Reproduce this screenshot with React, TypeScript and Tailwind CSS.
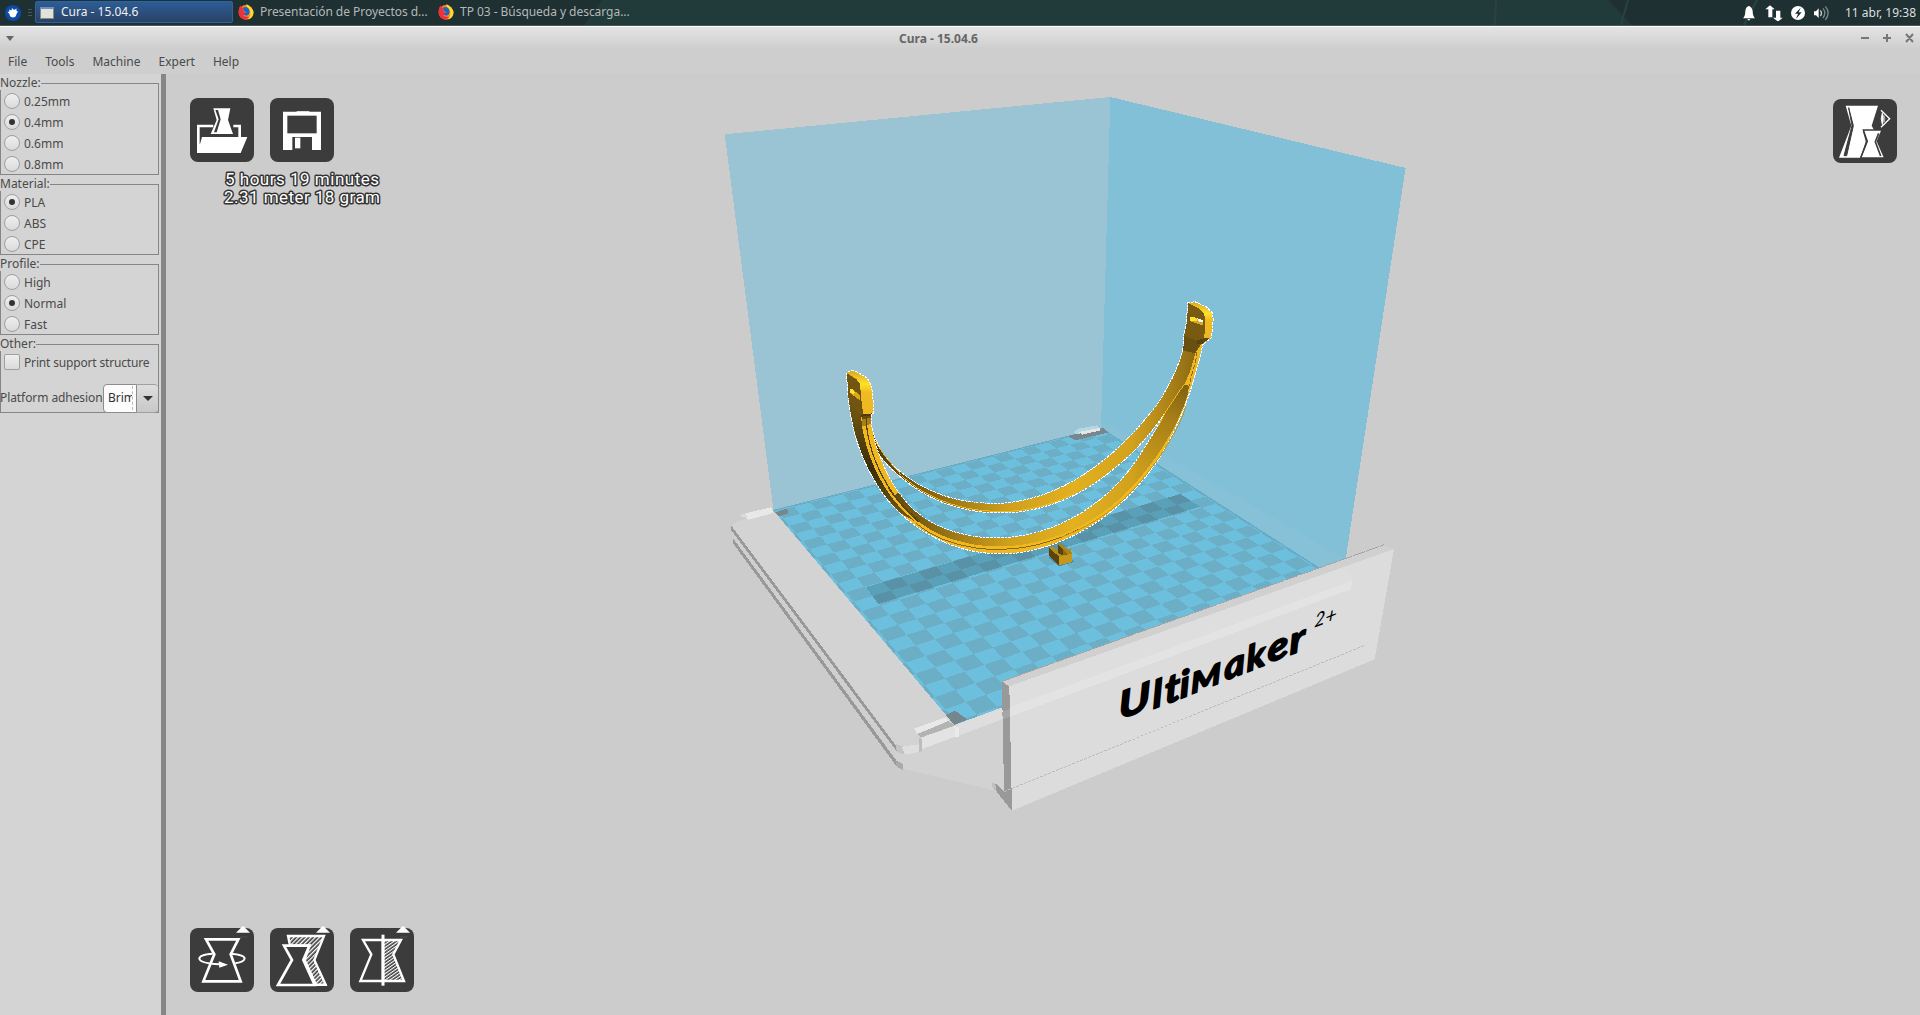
import React from "react";

type Pt = [number, number];

/* Corners of the build plate: back-left, back-right, front-right, front-left */
const P0: Pt = [773.5, 510.5];
const P1: Pt = [1101, 428];
const P2: Pt = [1342, 583];
const P3: Pt = [954.5, 725];

function project(u: number, v: number): Pt {
  const dx1 = P1[0] - P2[0];
  const dx2 = P3[0] - P2[0];
  const dx3 = P0[0] - P1[0] + P2[0] - P3[0];
  const dy1 = P1[1] - P2[1];
  const dy2 = P3[1] - P2[1];
  const dy3 = P0[1] - P1[1] + P2[1] - P3[1];
  const den = dx1 * dy2 - dx2 * dy1;
  const g = (dx3 * dy2 - dx2 * dy3) / den;
  const h = (dx1 * dy3 - dx3 * dy1) / den;
  const w = g * u + h * v + 1;
  return [
    ((P1[0] - P0[0] + g * P1[0]) * u + (P3[0] - P0[0] + h * P3[0]) * v + P0[0]) / w,
    ((P1[1] - P0[1] + g * P1[1]) * u + (P3[1] - P0[1] + h * P3[1]) * v + P0[1]) / w,
  ];
}

const HALF = 111.5;
const clamp = (n: number) => Math.max(-HALF, Math.min(HALF, n));

function darkCells(): string {
  let d = "";
  for (let x = -12; x < 12; x++) {
    for (let y = -12; y < 12; y++) {
      if ((x & 1) === (y & 1)) continue;
      const u1 = (clamp(x * 10) + HALF) / 223;
      const u2 = (clamp(x * 10 + 10) + HALF) / 223;
      const v1 = (HALF - clamp(y * 10)) / 223;
      const v2 = (HALF - clamp(y * 10 + 10)) / 223;
      const q = [project(u1, v1), project(u2, v1), project(u2, v2), project(u1, v2)];
      d += "M" + q.map((p) => p[0].toFixed(1) + " " + p[1].toFixed(1)).join("L") + "Z";
    }
  }
  return d;
}

/* Smooth cubic segments through a list of points (Catmull-Rom) */
function spline(pts: Pt[]): string {
  let d = `L${pts[0][0]} ${pts[0][1]}`;
  for (let i = 0; i < pts.length - 1; i++) {
    const a = pts[Math.max(0, i - 1)];
    const b = pts[i];
    const c = pts[i + 1];
    const e = pts[Math.min(pts.length - 1, i + 2)];
    d += `C${b[0] + (c[0] - a[0]) / 6} ${b[1] + (c[1] - a[1]) / 6} ${c[0] - (e[0] - b[0]) / 6} ${c[1] - (e[1] - b[1]) / 6} ${c[0]} ${c[1]}`;
  }
  return d;
}
const open = (pts: Pt[]) => "M" + spline(pts).slice(1);
const rev = (pts: Pt[]) => pts.slice().reverse();

const OUTER: Pt[] = [
  [84, 300], [88, 342], [96, 388], [106, 432], [122, 482], [145, 535], [172, 583], [205, 630], [245, 672],
  [290, 708], [340, 739], [390, 762], [440, 778], [500, 788], [560, 790], [620, 783], [680, 768], [740, 745],
  [800, 714], [850, 681], [900, 640], [950, 590], [1000, 528], [1040, 463], [1080, 380], [1105, 315],
  [1125, 250], [1137, 207], [1145, 172],
];
const INNER: Pt[] = [
  [1092, 286], [1050, 345], [1015, 408], [985, 457], [950, 512], [915, 558], [870, 605], [820, 646], [760, 684],
  [700, 712], [640, 731], [580, 742], [520, 745], [460, 740], [400, 726], [350, 706], [310, 683], [270, 650],
  [235, 608], [205, 560], [185, 515], [168, 470], [160, 435], [152, 400],
];
const EDGE: Pt[] = [
  [1103, 286], [1104, 310], [1092, 345], [1070, 398], [1040, 452], [1000, 512], [950, 575], [900, 626], [840, 673],
  [780, 708], [720, 735], [650, 756], [580, 767], [500, 768], [440, 759], [380, 742], [330, 718], [290, 690],
  [255, 656], [225, 615],
];
const REAR_TOP: Pt[] = [
  [1090, 182], [1070, 238], [1045, 290], [1010, 347], [960, 408], [910, 461], [850, 513], [790, 556], [730, 590],
  [670, 615], [610, 632], [550, 641], [500, 641], [440, 635], [390, 624], [340, 606], [290, 581], [245, 550],
  [210, 518], [185, 485], [165, 448], [155, 418],
];
const REAR_BOTTOM: Pt[] = [
  [162, 468], [180, 495], [205, 525], [245, 562], [300, 602], [350, 628], [400, 647], [460, 661], [520, 667],
  [580, 666], [640, 657], [700, 640], [760, 615], [820, 581], [870, 544], [920, 502], [960, 462], [1000, 415],
  [1050, 345], [1092, 286],
];
const SIDE: Pt[] = [
  [124, 378], [126, 410], [135, 450], [150, 500], [175, 557], [205, 608], [240, 652], [285, 694],
];

const REAR_BAND = "M1126 190" + spline(REAR_TOP) + spline(REAR_BOTTOM) + "Z";
const BODY =
  "M84 300L81 248L95 243L110 247L140 265L152 285L156 310L160 355L158 370L152 376" +
  spline(rev(INNER)) +
  "L1126 190L1090 182L1092 140L1100 100L1105 39L1125 37L1160 53L1176 70L1178 90L1173 142L1147 163" +
  spline(rev(OUTER)) +
  "Z";
const FRONT_FACE = "M1103 286" + spline(EDGE) + spline(rev(INNER.slice(0, 19))) + "Z";

const LETTERS: { c: string; x: number; y: number; s: number; w: number }[] = [
  { c: "U", x: 418, y: 600, s: 112, w: 1.22 },
  { c: "l", x: 519, y: 567, s: 112, w: 1.1 },
  { c: "t", x: 556, y: 554, s: 116, w: 1.1 },
  { c: "i", x: 601, y: 536, s: 110, w: 1.1 },
  { c: "M", x: 634, y: 523, s: 84, w: 1.22 },
  { c: "a", x: 734, y: 482, s: 110, w: 1.08 },
  { c: "k", x: 801, y: 457, s: 104, w: 1.08 },
  { c: "e", x: 864, y: 430, s: 110, w: 1.16 },
  { c: "r", x: 930, y: 405, s: 112, w: 1.18 },
];

function Scene() {
  return (
    <svg className="block h-full w-full" viewBox="166 74 1754 941" shapeRendering="crispEdges">
      <defs>
        <linearGradient id="inner" gradientUnits="userSpaceOnUse" x1="160" y1="0" x2="1130" y2="0">
          <stop offset="0" stopColor="#4d390b" />
          <stop offset="0.15" stopColor="#7d5f12" />
          <stop offset="0.28" stopColor="#a98017" />
          <stop offset="0.42" stopColor="#d0a01d" />
          <stop offset="0.62" stopColor="#e2b020" />
          <stop offset="0.8" stopColor="#d2a21d" />
          <stop offset="0.91" stopColor="#ad8418" />
          <stop offset="1" stopColor="#8b6914" />
        </linearGradient>
        <linearGradient id="slot" gradientUnits="userSpaceOnUse" x1="1100" y1="286" x2="960" y2="540">
          <stop offset="0" stopColor="#806112" />
          <stop offset="0.4" stopColor="#a98017" />
          <stop offset="1" stopColor="#cb9c1c" />
        </linearGradient>
        <linearGradient id="outer" gradientUnits="userSpaceOnUse" x1="0" y1="250" x2="0" y2="690">
          <stop offset="0" stopColor="#7b5d12" />
          <stop offset="0.3" stopColor="#68500f" />
          <stop offset="0.65" stopColor="#3c2d08" />
          <stop offset="1" stopColor="#76590f" />
        </linearGradient>
        <linearGradient id="tip" x1="0" y1="0" x2="0" y2="1">
          <stop offset="0" stopColor="#dba91f" />
          <stop offset="0.3" stopColor="#ffe12a" />
          <stop offset="0.5" stopColor="#efba22" />
          <stop offset="1" stopColor="#efb820" />
        </linearGradient>
      </defs>

      {/* chamber walls */}
      <path d="M724.7 134.3L1110.4 97L1101 428L773.5 510.5Z" fill="#9ac4d3" />
      <path d="M1110.4 97L1405.6 168L1342 583L1101 428Z" fill="#81c0d7" />

      {/* plate */}
      <path d="M773.5 510.5L1101 428L1342 583L954.5 725Z" fill="#6cbfdd" />
      <path d={darkCells()} fill="#6baec6" />
      <path d="M1101 424L1112 425L1352 563L1342 583L1108 433Z" fill="#86c1d8" />
      <path d="M773.5 510.5L1101 428L1108 432" fill="none" stroke="#69aac2" strokeWidth="1" />
      <path d="M1108 433L1342 583" fill="none" stroke="#67abc6" strokeWidth="1.5" />
      <path d="M865.7 587.3L1180 494L1200 506.7L878.3 604Z" fill="#000" fillOpacity="0.16" />

      {/* back clip */}
      <g transform="translate(820 290) scale(0.33333)">
        <path d="M744 438L852 414L864 428L765 451Z" fill="#7a868c" />
        <path d="M760 426L775 416L830 406L840 414L832 424L770 432Z" fill="#b0d8e7" />
        <path d="M776 426L838 414L842 421L786 434Z" fill="#e6e6e6" />
      </g>

      {/* left carriage and lower body */}
      <g transform="translate(710 480) scale(0.33333)">
        <path d="M63 138L69 190L560 850L578 866L855 932L882 935L882 680L733 735L190 92Z" fill="#d2d2d2" />
        <path d="M63 138L80 125L102 117L190 92L733 735L625 800L585 800L558 793Z" fill="#d3d3d3" />
        <path d="M63 136L63 150L556 808L566 820L556 794Z" fill="#999" />
        <path d="M63 151L69 178L556 842L556 808Z" fill="#cfcfcf" />
        <path d="M69 175L69 190L556 854L572 866L578 852L560 843Z" fill="#999" />
        <path d="M558 793L585 801L627 793L627 816L585 824L560 816Z" fill="#c4c4c4" />
        <path d="M575 800L627 793L627 816L585 824Z" fill="#dedede" />
        <path d="M556 844L580 852L580 871L560 860Z" fill="#aaa" />
        <path d="M94 103L182 82L190 92L190 99L116 119L108 112L94 110Z" fill="#e8e8e8" />
        <path d="M94 103L108 100L112 112L94 112Z" fill="#dadada" />
        <path d="M195 97L232 86L234 101L206 109Z" fill="#7a868c" />
        <path d="M707 705L735 692L772 718L733 735Z" fill="#75868e" />
        <path d="M612 746L708 711L716 722L622 762Z" fill="#e8e8e8" />
        <path d="M622 762L716 723L733 737L634 772Z" fill="#b3b3b3" />
        <path d="M634 773L733 738L736 770L634 808Z" fill="#e3e3e3" />
        <path d="M627 773L635 776L635 814L627 816Z" fill="#bdbdbd" />
        <path d="M733 738L748 742L748 770L736 770Z" fill="#eaeaea" />
        <path d="M733 736L882 681L882 716L748 766L748 742Z" fill="#dedede" />
        <path d="M848 910L860 912L880 934L905 992L856 930Z" fill="#999" />
        <path d="M846 909L856 911L858 932L848 926Z" fill="#c0c0c0" />
      </g>

      {/* small part with its shadow */}
      <g transform="translate(820 290) scale(0.33333)">
        <path d="M684 800L716 829L762 816L752 804Z" fill="#4c8aa3" />
        <path d="M688 773L700 770L718 786L752 775L756 793L718 802Z" fill="#b48c19" />
        <path d="M714 766L722 762L742 778L742 794L728 796L714 788Z" fill="#5b440c" />
        <path d="M728 770L742 780L740 793L728 796Z" fill="#8a6914" />
        <path d="M688 774L718 801L718 826L688 799Z" fill="#5b440c" />
        <path d="M718 801L756 791L756 816L718 826Z" fill="#c5981b" />
        <path d="M716 764L722 761L755 788L751 794L738 787Z" fill="#a98218" />
      </g>

      {/* visor frame */}
      <g transform="translate(820 290) scale(0.33333)">
        <path d={REAR_BAND} fill="none" stroke="#fff" strokeWidth="6" strokeDasharray="8 3" />
        <path d={REAR_BAND} fill="url(#inner)" />
        <path d={open(REAR_BOTTOM.slice(3, 13))} fill="none" stroke="#efb820" strokeWidth="3" transform="translate(0 -3)" />
        <path d="M158 440Q190 500 245 556" fill="none" stroke="#e3b020" strokeWidth="3" />
        <path d={BODY} fill="none" stroke="#fff" strokeWidth="6" strokeDasharray="8 3" />
        <path d={BODY} fill="#efb820" />
        {/* inner face of the rear arm at the right */}
        <path d={"M1126 190L1112 240L1092 286L1050 345L1008 405L960 420" + spline(rev(REAR_TOP.slice(0, 5))) + "Z"} fill="url(#inner)" />
        {/* inner face of the front arm */}
        <path d={FRONT_FACE} fill="url(#inner)" />
        <path
          d={"M1092 284" + spline(EDGE.slice(0, 7)) + spline(rev(INNER.slice(0, 5))) + "Z"}
          fill="url(#slot)"
        />
        <path d="M1092 284Q1070 316 1050 345T1015 408" fill="none" stroke="#efb820" strokeWidth="3" />
        {/* outer side at the left */}
        <path
          d={"M81 248L120 275L130 374" + spline(SIDE) + spline(rev(OUTER.slice(0, 9))) + "Z"}
          fill="url(#outer)"
        />
        <path d="M126 378L152 374L152 402L126 410Z" fill="#a98017" />
        <path d="M126 378L152 374L152 384L126 388Z" fill="#6a5010" />
        <path d="M139 376L140 410Q146 460 165 510T220 612T298 697" fill="none" stroke="#5b440c" strokeWidth="3.5" />
        <path d="M205 595Q240 648 300 692" fill="none" stroke="#5b440c" strokeWidth="3" />
        <path d={open(EDGE.slice(9, 18))} fill="none" stroke="#8a6914" strokeWidth="3" transform="translate(-3 9)" />
        <path d={open(EDGE.slice(2, 11))} fill="none" stroke="#c4961b" strokeWidth="3" transform="translate(6 6)" />
        <path d="M1132 165L1130 200L1114 260L1104 300L1090 350" fill="none" stroke="#8a6914" strokeWidth="3" strokeDasharray="14 6" />
        {/* left tip */}
        <path d="M81 248L95 243L110 247L140 265L124 280L84 262Z" fill="#c99b1c" />
        <path d="M81 250L120 275L124 378L96 345L86 330Z" fill="#715510" />
        <path d="M81 248L95 243L110 247L140 265L152 285L156 310L160 368L130 374L124 330L120 282L108 266Z" fill="url(#tip)" />
        <path d="M89 296L97 296L119 316L120 331L91 310Z" fill="#d9a81f" />
        <path d="M89 297L97 296L106 308L100 313L90 308Z" fill="#ffe02a" />
        <path d="M124 374L158 370L150 377L124 380Z" fill="#4d390b" />
        {/* right tip */}
        <path d="M1105 39L1156 66L1153 146L1126 190L1090 182L1092 140L1100 100Z" fill="#785a11" />
        <path d="M1092 138L1126 150L1140 158L1124 190L1090 180Z" fill="#6a5010" />
        <path d="M1105 39L1125 37L1160 53L1176 70L1178 90L1173 142L1154 147L1157 88L1152 72L1132 52Z" fill="url(#tip)" />
        <path d="M1110 82L1124 82L1149 95L1149 107L1110 94Z" fill="#d9a81f" />
        <path d="M1110 82L1126 82L1132 92L1110 94Z" fill="#ffe02a" />
        <path d="M1130 84L1148 90L1149 97L1136 94Z" fill="#fff" />
        <path d="M1128 152L1154 145L1170 144L1146 162L1132 162Z" fill="#5b440c" />
      </g>

      {/* front panel */}
      <g transform="translate(980 520) scale(0.33333)">
        <path d="M66 484L1213 74L1242 88L88 500Z" fill="#d0d0d0" />
        <path d="M88 499L1242 87L1184 418L96 872Z" fill="#dcdcdc" />
        <path d="M88 499L1080 145L1117 170L1117 186L90 568Z" fill="#dedede" />
        <path d="M90 562L1117 182L1112 208L91 590Z" fill="#e3e3e3" />
        <path d="M66 484L88 500L96 872L52 815L72 812Z" fill="#999" />
        <path d="M67 575L90 566L91 590L68 598Z" fill="#a6a6a6" />
        <path d="M66 484L1213 74" stroke="#a4a4a4" strokeWidth="3" strokeDasharray="40 3" fill="none" />
        <path d="M72 815L1155 376" stroke="#bcbcbc" strokeWidth="3" strokeDasharray="9 4" fill="none" />
        <g
          fill="#000"
          stroke="#000"
          strokeWidth="5"
          strokeLinejoin="round"
          className="font-bold italic"
          style={{ fontFamily: '"Lato", "Liberation Sans", sans-serif' }}
        >
          {LETTERS.map((l) => (
            <text
              key={l.c}
              fontSize={l.s}
              transform={`matrix(${l.w} ${-0.394 * l.w} 0.04 1 ${l.x} ${l.y})`}
            >
              {l.c}
            </text>
          ))}
        </g>
        <g fill="#000" className="italic" style={{ fontFamily: '"Lato", "Liberation Sans", sans-serif' }}>
          <text fontSize="58" transform="matrix(0.95 -0.36 -0.08 1 1002 323)">2</text>
          <text fontSize="60" transform="matrix(1 -0.39 -0.08 1 1034 314)">+</text>
        </g>
      </g>
    </svg>
  );
}

function Tile({ box, children }: { box: string; children: React.ReactNode }) {
  return (
    <button className="block h-16 w-16 rounded-lg bg-[#3c3c3c]">
      <svg className="h-16 w-16 overflow-visible" viewBox={box}>
        {children}
      </svg>
    </button>
  );
}

const LoadTile = () => (
  <Tile box="570 84 192 192">
    <path d="M595 225V168H640M700 168H719V205" fill="none" stroke="#fff" strokeWidth="8" />
    <path d="M606 201H742L722 249H591V222H600Z" fill="#fff" />
    <path d="M640 115H691L684 150L699 192H632L650 150Z" fill="#fff" />
    <path d="M646 120L656 148L642 187H650L662 148L654 120Z" fill="#3c3c3c" />
  </Tile>
);

const SaveTile = () => (
  <Tile box="810 84 192 192">
    <path d="M849 125H963V240H936V201H877V240H849Z" fill="#fff" />
    <path d="M862 137H950V190H862Z" fill="#3c3c3c" />
    <path d="M885 203H901V235H885Z" fill="#fff" />
    <path d="M890 123H928V126H890Z" fill="#ddd" />
  </Tile>
);

const ViewTile = () => (
  <Tile box="1059 295 192 192">
    <path d="M1097 315H1194L1175 375L1182 388H1150L1158 420L1142 471H1077L1114 375Z" fill="#fff" />
    <path d="M1106 321L1120 375L1100 465H1092L1116 375Z" fill="#3c3c3c" stroke="#3c3c3c" strokeWidth="3" />
    <path d="M1150 388H1206L1192 422L1214 472H1142L1162 422Z" fill="#fff" stroke="#3c3c3c" strokeWidth="4" />
    <path d="M1142 471L1160 424L1150 390" fill="none" stroke="#3c3c3c" strokeWidth="4" />
    <path d="M1196 398L1186 423L1202 466" fill="none" stroke="#3c3c3c" strokeWidth="5" />
    <path d="M1203 329L1229 354L1203 380" fill="none" stroke="#fff" strokeWidth="4" />
    <path d="M1207 336Q1214 354 1207 372Q1200 354 1207 336Z" fill="#fff" stroke="#fff" strokeWidth="2" />
    <path d="M1212 344Q1217 354 1212 365" fill="none" stroke="#fff" strokeWidth="2" />
  </Tile>
);

const RotateTile = () => (
  <Tile box="30 40 192 192">
    <path d="M168 54L189 33L210 54Z" fill="#fff" />
    <path d="M180 67H202" stroke="#555" strokeWidth="2" />
    <path d="M78 74H175L152 119L182 200H70L103 119Z" fill="none" stroke="#fff" strokeWidth="8" />
    <path d="M98 117Q58 120 58 132Q60 146 118 149M150 117Q194 120 194 132Q192 142 166 146" fill="none" stroke="#fff" strokeWidth="6" />
    <path d="M116 140L144 150L118 159Z" fill="#fff" />
  </Tile>
);

const ScaleTile = () => (
  <Tile box="270 40 192 192">
    <defs>
      <pattern id="hatch" width="9" height="9" patternUnits="userSpaceOnUse" patternTransform="rotate(-45)">
        <rect width="9" height="9" fill="#3c3c3c" />
        <rect width="9" height="4" fill="#fff" />
      </pattern>
    </defs>
    <path d="M408 54L429 33L450 54Z" fill="#fff" />
    <path d="M324 64H432L403 136L437 210H408L374 136L388 93H330Z" fill="url(#hatch)" stroke="#fff" strokeWidth="7" />
    <path d="M312 93H388L370 136L404 211H294L336 136Z" fill="#3c3c3c" stroke="#fff" strokeWidth="8" />
    <path d="M292 211H441" stroke="#fff" strokeWidth="6" />
  </Tile>
);

const MirrorTile = () => (
  <Tile box="510 40 192 192">
    <defs>
      <pattern id="hatch2" width="8" height="8" patternUnits="userSpaceOnUse" patternTransform="rotate(-35)">
        <rect width="8" height="8" fill="#3c3c3c" />
        <rect width="8" height="3.5" fill="#fff" />
      </pattern>
    </defs>
    <path d="M648 54L669 33L690 54Z" fill="#fff" />
    <path d="M660 67H682" stroke="#555" strokeWidth="2" />
    <path d="M609 76H663L640 119L672 199H609Z" fill="url(#hatch2)" stroke="#fff" strokeWidth="7" />
    <path d="M609 76H549L574 119L541 199H609Z" fill="none" stroke="#fff" strokeWidth="7" />
    <path d="M609 60V213" stroke="#fff" strokeWidth="9" />
  </Tile>
);

function Radio({ label, on }: { label: string; on?: boolean }) {
  return (
    <label className="flex h-[21px] items-start gap-1 pl-[3px]">
      <span className="mt-0.5 flex size-4 shrink-0 items-center justify-center rounded-full border border-[#9f9f9f] bg-linear-to-b from-[#efefef] to-[#dadada]">
        {on && <span className="size-1.5 rounded-full bg-[#333]" />}
      </span>
      <span className="leading-[21px]">{label}</span>
    </label>
  );
}

function Group({ title, size, children }: { title: string; size: string; children: React.ReactNode }) {
  return (
    <section className={"relative mt-[9px] w-[159px] border border-[#868686] pt-[7px] " + size}>
      <h2 className="absolute -top-2 -left-px bg-[#d4d4d4] leading-[14px]">{title}</h2>
      {children}
    </section>
  );
}

function Sidebar() {
  return (
    <aside className="w-[161px] shrink-0 bg-[#d4d4d4] text-[12px] whitespace-nowrap text-[#4a4a4a]">
      <div className="flow-root">
        <Group title="Nozzle:" size="h-[92px]">
          <Radio label="0.25mm" />
          <Radio label="0.4mm" on />
          <Radio label="0.6mm" />
          <Radio label="0.8mm" />
        </Group>
        <Group title="Material:" size="h-[71px]">
          <Radio label="PLA" on />
          <Radio label="ABS" />
          <Radio label="CPE" />
        </Group>
        <Group title="Profile:" size="h-[71px]">
          <Radio label="High" />
          <Radio label="Normal" on />
          <Radio label="Fast" />
        </Group>
        <Group title="Other:" size="h-[69px]">
          <label className="flex h-[21px] items-start gap-1 pl-[3px]">
            <span className="mt-0.5 size-4 shrink-0 rounded-xs border border-[#9f9f9f] bg-linear-to-b from-[#efefef] to-[#dadada]" />
            <span className="leading-[21px] tracking-[-0.17px]">Print support structure</span>
          </label>
          <div className="-ml-px mt-[10px] flex h-[30px] items-center">
            <span className="w-[103px] tracking-[-0.08px]">Platform adhesion</span>
            <span className="flex h-[29px] w-[34px] items-center overflow-hidden rounded-l-sm border border-[#8c8c8c] bg-[#fcfcfc] pl-1 text-[#333]">
              <span className="w-[25px] overflow-hidden border-r border-dashed border-[#bbb] leading-6">Brim</span>
            </span>
            <span className="flex h-[29px] w-[21px] items-center justify-center rounded-r-sm border-y border-[#a0a0a0] bg-linear-to-b from-[#dedede] to-[#c8c8c8]">
              <svg className="h-[5px] w-2.5" viewBox="0 0 10 5">
                <path d="M0 0H10L5 5Z" fill="#333" />
              </svg>
            </span>
          </div>
        </Group>
      </div>
    </aside>
  );
}

function Firefox() {
  return (
    <svg className="size-4 shrink-0" viewBox="0 0 16 16">
      <circle cx="8" cy="8.4" r="7.3" fill="#ff8a16" />
      <path d="M8.5 0Q14 3 15.6 8Q15.5 14 10 15.6Q14 10 11 5Q8 3 8.500 0Z" fill="#ffd92e" />
      <path d="M1 4L2.500 1.500L4 4L6 3L5 7L8 9L5 12L11 13L8 15.800Q1.500 15 0.500 9Z" fill="#f0303f" />
      <path d="M5.500 3.500Q9 2 11 5Q12.500 9 10 11Q7 12.500 5.500 10L8.500 8.500L5.500 7Z" fill="#1c64c8" />
    </svg>
  );
}

function Taskbar() {
  return (
    <header className="relative flex h-[25px] items-center overflow-hidden bg-[#1f3033] text-[12px] whitespace-nowrap text-[#b4b8b8]">
      <svg className="absolute inset-0 h-full w-full" viewBox="0 0 1920 25" preserveAspectRatio="none">
        <path d="M602 0H1608L1632 25H584Z" fill="#213a3a" />
        <path d="M1496 0L1495 25M1628 0L1621 25M1757 0L1744 25" stroke="#2d4240" strokeWidth="2" />
      </svg>
      <svg className="relative ml-[5px] size-4" viewBox="0 0 16 16">
        <circle cx="8" cy="8" r="8" fill="#0b4aa8" />
        <path d="M2.500 7L4.500 6.500L4 4.500L6.500 5.500L7 3L9 5L11.500 3.500L11.500 6L13 6.500L11.500 9Q11 12.500 7.500 12.500Q4.500 12 4.500 9Z" fill="#fff" />
      </svg>
      <div className="relative ml-[7px] flex w-[7px] flex-col gap-0.5">
        <span className="h-px w-1 bg-[#47575a]" />
        <span className="h-px w-1 bg-[#47575a]" />
        <span className="h-px w-1 bg-[#47575a]" />
      </div>
      <div className="relative mb-0.5 flex h-[22px] w-[198px] items-center gap-[7px] rounded-xs border border-[#2f639f] bg-linear-to-b from-[#2c5d97] to-[#2a4266] pl-1 text-[#f0f0f0]">
        <span className="mt-[3px] flex h-3 w-3.5 border border-[#888] border-t-2 border-t-[#6c92bd] bg-[#e2e2dc]" />
        <span>Cura - 15.04.6</span>
      </div>
      <div className="relative mb-0.5 ml-[5px] flex w-[200px] items-center gap-1.5">
        <Firefox />
        <span className="tracking-[-0.04px]">Presentación de Proyectos d...</span>
      </div>
      <div className="relative mb-0.5 flex items-center gap-1.5">
        <Firefox />
        <span className="tracking-[-0.04px]">TP 03 - Búsqueda y descarga...</span>
      </div>
      <div className="relative mr-1 ml-auto flex items-center text-[#dcdfdf]">
        <svg className="h-4 w-[88px]" viewBox="789 12 264 48" fill="#fff">
          <path d="M806 15Q797 18 796 30Q796 46 789 52H825Q818 46 818 30Q816 18 807 15ZM802 54H811L807 59Z" />
          <path d="M870 13L856 25H865V49H877V25H884ZM888 29V50H879L894 62L908 50H901V29Z" />
          <circle cx="954" cy="36" r="21" />
          <path d="M962 20L945 38H954L948 54L965 34H956Z" fill="#1f3033" />
          <path d="M1002 31H1008L1016 22V51L1008 43H1002Z" />
          <path d="M1021 28Q1028 36 1021 45" fill="none" stroke="#ccc" strokeWidth="4" />
          <path d="M1029 22Q1040 36 1029 51M1036 16Q1053 36 1036 57" fill="none" stroke="#7b8789" strokeWidth="4" />
        </svg>
        <span className="ml-[14px] w-[71px] text-right">11 abr, 19:38</span>
      </div>
    </header>
  );
}

function TitleBar() {
  return (
    <div className="grid h-[23px] shrink-0 grid-cols-[1fr_auto_1fr] items-center border-t border-white bg-linear-to-b from-[#e4e4e4] to-[#cecece] text-[12px] text-[#666]">
      <svg className="ml-1.5 h-[5px] w-2" viewBox="0 0 8 5">
        <path d="M0 0H8L4 5Z" fill="#666" />
      </svg>
      <h1 className="translate-x-[-21.5px] translate-y-px font-bold">Cura - 15.04.6</h1>
      <svg className="mr-1.5 h-3 w-[54px] justify-self-end" viewBox="0 0 54 12" fill="none" stroke="#777" strokeWidth="2">
        <path d="M1 6H9M23 6H31M27 2V10M46 2L53 10M53 2L46 10" />
      </svg>
    </div>
  );
}

export default function App() {
  return (
    <div
      className="flex h-[1015px] w-[1920px] flex-col overflow-hidden bg-[#cdcdcd]"
      style={{ fontFamily: '"Noto Sans", sans-serif' }}
    >
      <Taskbar />
      <div className="h-px shrink-0 bg-[#4c5757]" />
      <TitleBar />
      <nav className="flex h-[25px] shrink-0 items-center gap-[18px] bg-[#cecece] pl-2 text-[12px] text-[#4a4a4a]">
        <span>File</span>
        <span>Tools</span>
        <span>Machine</span>
        <span>Expert</span>
        <span>Help</span>
      </nav>
      <div className="flex min-h-0 flex-1">
        <Sidebar />
        <div className="w-[5px] shrink-0 bg-[#868686]" />
        <main className="relative min-w-0 flex-1 bg-[#ccc]">
          <Scene />
          <div className="absolute inset-0 flex flex-col justify-between px-6 pt-6 pb-[23px]">
            <div className="flex justify-between">
              <div>
                <div className="flex gap-4">
                  <LoadTile />
                  <SaveTile />
                </div>
                <svg className="block h-[50px] w-[230px]" viewBox="0 0 230 50">
                  <g
                    fontSize="17"
                    textAnchor="middle"
                    fill="#fff"
                    stroke="#333"
                    strokeWidth="3"
                    strokeLinejoin="round"
                    paintOrder="stroke"
                    style={{ fontFamily: "Roboto, sans-serif" }}
                  >
                    <text x="112" y="22.500" textLength="154">5 hours 19 minutes</text>
                    <text x="112" y="41" textLength="156">2.31 meter 18 gram</text>
                  </g>
                </svg>
              </div>
              <div className="mt-px -mr-px">
                <ViewTile />
              </div>
            </div>
            <div className="flex gap-4">
              <RotateTile />
              <ScaleTile />
              <MirrorTile />
            </div>
          </div>
        </main>
      </div>
    </div>
  );
}
